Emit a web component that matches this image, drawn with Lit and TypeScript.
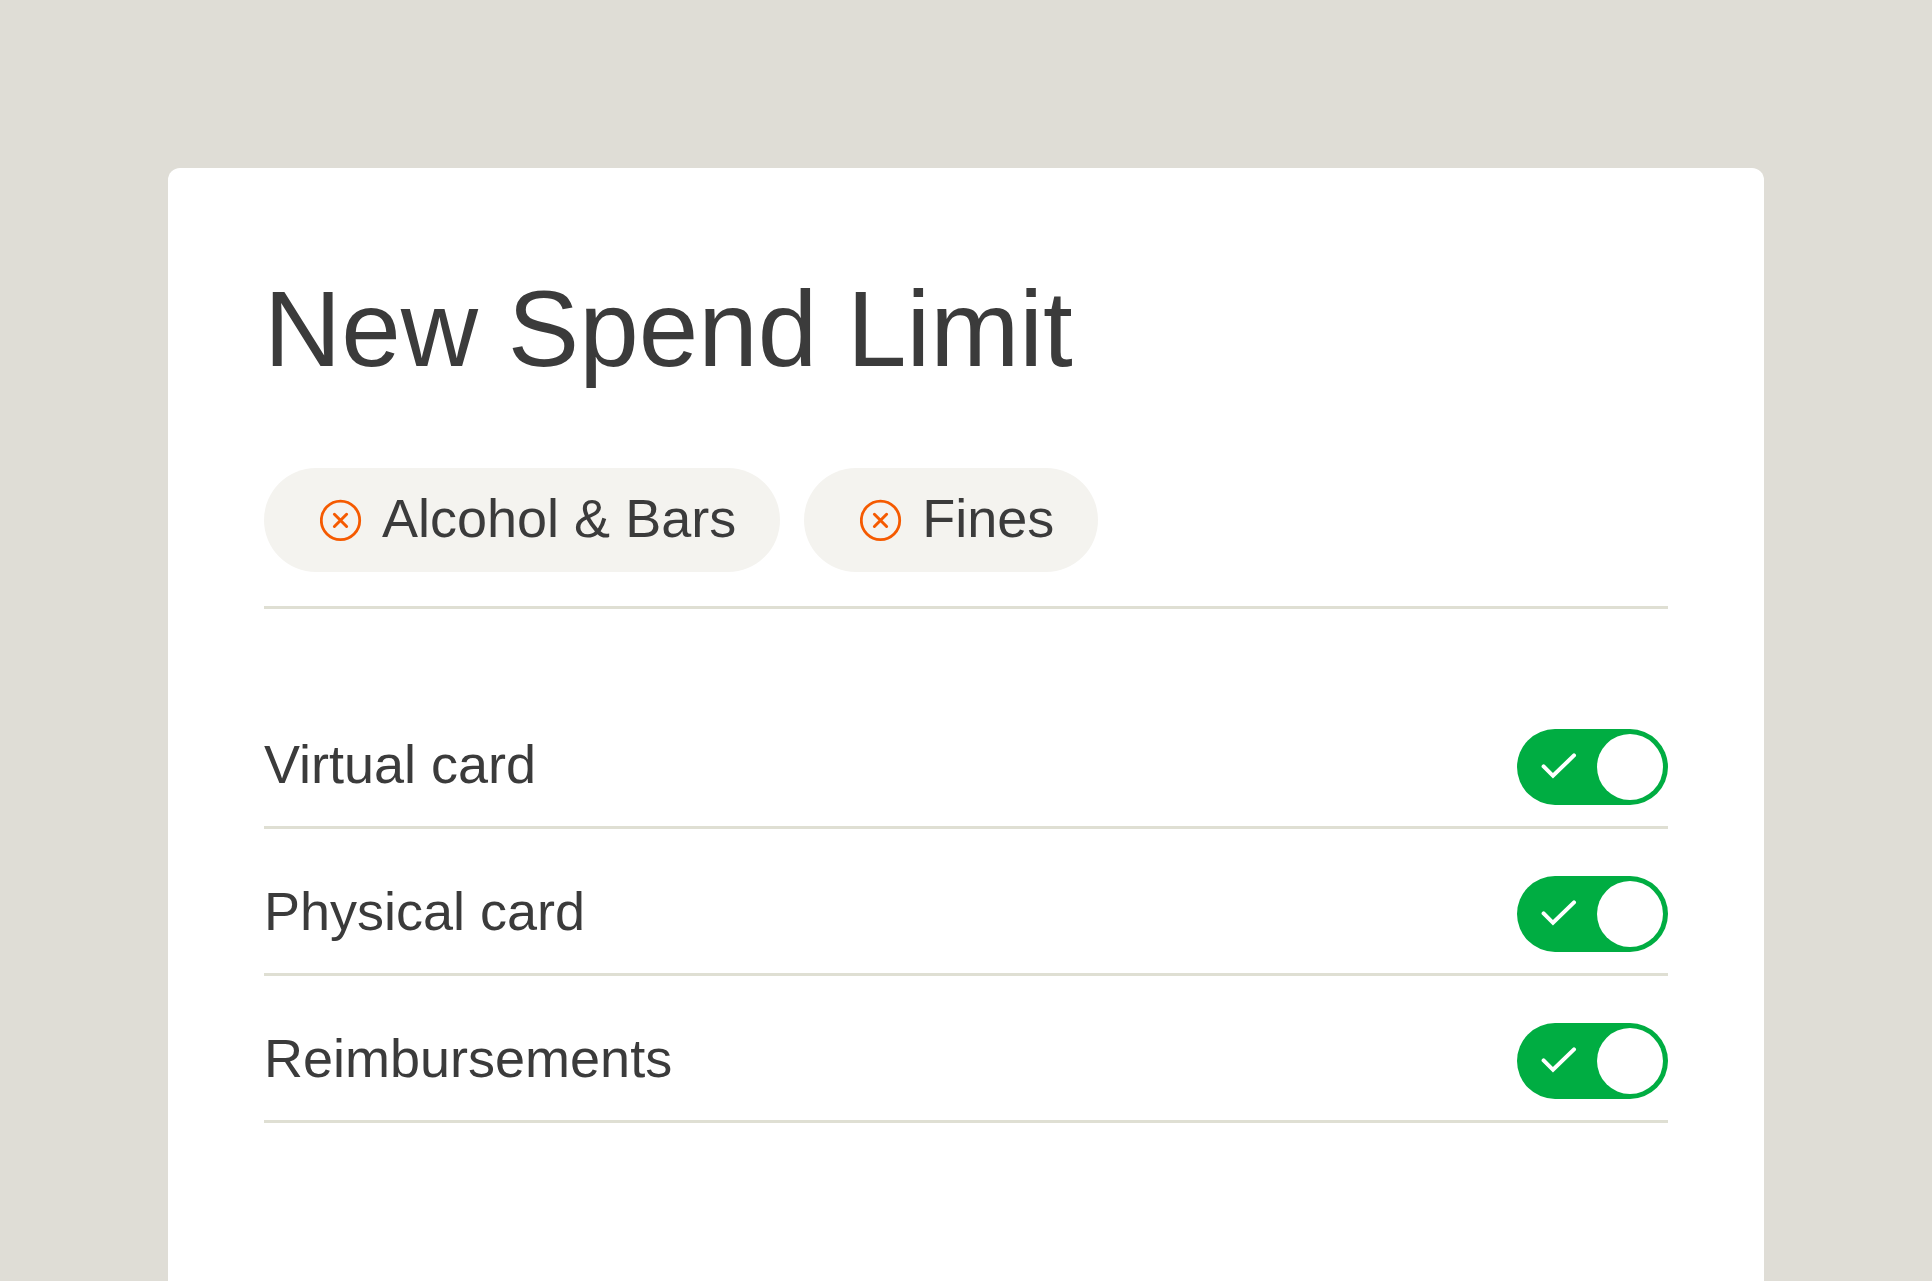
import { LitElement, html, css } from "lit";
import { customElement, property, state } from "lit/decorators.js";

@customElement("category-chip")
export class CategoryChip extends LitElement {
  @property() label = "";

  static styles = css`
    :host {
      display: flex;
      align-items: center;
      gap: 20px;
      height: 104px;
      box-sizing: border-box;
      padding: 0 44px 0 56px;
      border-radius: 52px;
      background: #f4f3ef;
    }
    .remove {
      display: block;
      width: 42px;
      height: 42px;
      padding: 0;
      border: 0;
      background: none;
      cursor: pointer;
    }
    .icon {
      display: block;
      width: 100%;
      height: 100%;
      fill: none;
      stroke: #f55a00;
      stroke-linecap: round;
    }
    .label {
      padding-bottom: 4px;
      white-space: nowrap;
    }
  `;

  render() {
    return html`
      <button
        class="remove"
        type="button"
        aria-label="Remove ${this.label}"
        @click=${() => this.dispatchEvent(new CustomEvent("remove"))}
      >
        <svg class="icon" viewBox="0 0 42 42" aria-hidden="true">
          <circle cx="20.5" cy="21.4" r="19.2" stroke-width="2.8" />
          <path d="M14.4 15.3 26.6 27.5M26.6 15.3 14.4 27.5" stroke-width="3" />
        </svg>
      </button>
      <span class="label">${this.label}</span>
    `;
  }
}

@customElement("toggle-row")
export class ToggleRow extends LitElement {
  @property() label = "";
  @property({ type: Boolean }) checked = false;

  static styles = css`
    :host {
      display: block;
    }
    .row {
      display: flex;
      align-items: center;
      justify-content: space-between;
      padding: 47px 0 21px;
      border-bottom: 3px solid #dfdfd3;
    }
    .label {
      padding-bottom: 6px;
    }
    .switch {
      display: grid;
      flex: none;
      width: 151px;
      height: 76px;
    }
    .input,
    .check {
      grid-area: 1 / 1;
    }
    .input {
      appearance: none;
      display: flex;
      align-items: center;
      width: 100%;
      height: 100%;
      box-sizing: border-box;
      margin: 0;
      padding: 0 5px;
      border-radius: 38px;
      background: #c9c8c1;
      cursor: pointer;
    }
    .input::before {
      content: "";
      width: 66px;
      height: 66px;
      border-radius: 50%;
      background: #fff;
    }
    .input:checked {
      justify-content: flex-end;
      background: #00ad42;
    }
    .check {
      width: 36px;
      height: 26px;
      margin: 24px 0 0 24px;
      fill: none;
      stroke: #fff;
      stroke-width: 4;
      stroke-linecap: round;
      visibility: hidden;
      pointer-events: none;
    }
    .input:checked + .check {
      visibility: visible;
    }
  `;

  private onChange(e: Event) {
    this.checked = (e.target as HTMLInputElement).checked;
  }

  render() {
    return html`
      <div class="row">
        <label class="label" for="switch">${this.label}</label>
        <span class="switch">
          <input
            class="input"
            id="switch"
            type="checkbox"
            role="switch"
            .checked=${this.checked}
            @change=${this.onChange}
          />
          <svg class="check" viewBox="0 0 36 26" aria-hidden="true">
            <path d="M2.6 13.4 12 22.8 33 2.4" />
          </svg>
        </span>
      </div>
    `;
  }
}

@customElement("app-root")
export class AppRoot extends LitElement {
  @state() private categories = ["Alcohol & Bars", "Fines"];

  private options = ["Virtual card", "Physical card", "Reimbursements"];

  static styles = css`
    :host {
      display: flex;
      flex-direction: column;
      min-height: 100vh;
      box-sizing: border-box;
      padding: 168px 168px 0;
      background: #dfddd6;
      color: #3b3b3b;
      font-family: "Liberation Sans", Arial, sans-serif;
      font-size: 54px;
      line-height: 60px;
    }
    .card {
      flex: 1;
      padding: 101px 96px 0;
      border-radius: 12px 12px 0 0;
      background: #fff;
    }
    .title {
      margin: 0 0 79px;
      font-size: 107px;
      font-weight: 400;
      line-height: 120px;
    }
    .chips {
      display: flex;
      flex-wrap: wrap;
      gap: 24px;
      padding-bottom: 34px;
      border-bottom: 3px solid #dfdfd3;
    }
    .options {
      padding-top: 73px;
    }
  `;

  private remove(name: string) {
    this.categories = this.categories.filter((c) => c !== name);
  }

  render() {
    return html`
      <main class="card">
        <h1 class="title">New Spend Limit</h1>
        <div class="chips">
          ${this.categories.map(
            (c) => html`<category-chip .label=${c} @remove=${() => this.remove(c)}></category-chip>`
          )}
        </div>
        <div class="options">
          ${this.options.map((o) => html`<toggle-row .label=${o} checked></toggle-row>`)}
        </div>
      </main>
    `;
  }
}
